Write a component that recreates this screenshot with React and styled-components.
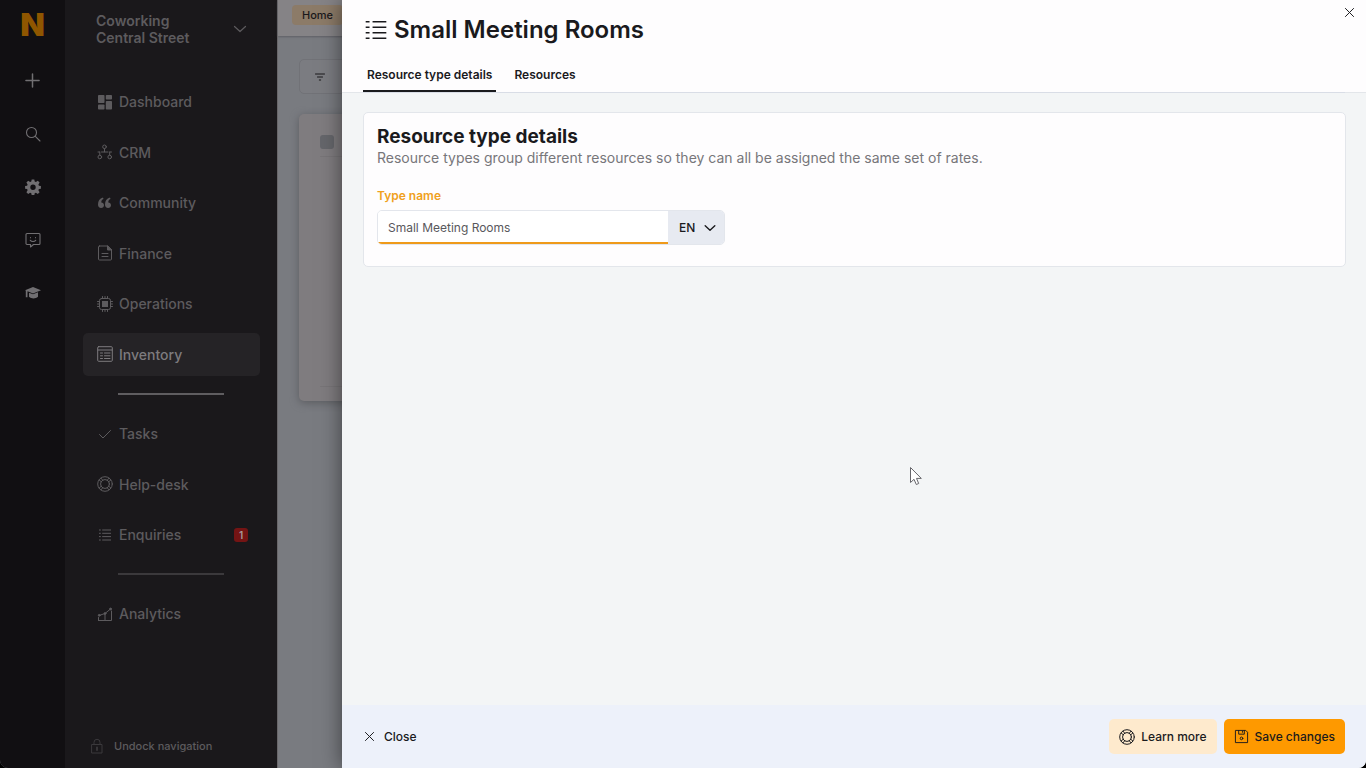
import React from "react";
import styled, { createGlobalStyle, css } from "styled-components";

const GlobalStyle = createGlobalStyle`
  *, *::before, *::after { box-sizing: border-box; }
  body {
    margin: 0;
    background: #000;
    font-family: Inter, "Liberation Sans", sans-serif;
    color: #1a1a1d;
  }
  button, input, select { font: inherit; color: inherit; }
  h1, h2, p, ul { margin: 0; padding: 0; }
  ul { list-style: none; }
`;

const Svg = styled.svg`
  display: block;
  flex: none;
  width: ${(p) => p.$size || 16}px;
  height: ${(p) => p.$size || 16}px;
  fill: none;
  stroke: currentColor;
  stroke-width: ${(p) => p.$weight || 1};
  stroke-linecap: round;
  stroke-linejoin: round;
`;

const shapes = {
  plus: <path d="M8 1v14M1 8h14" />,
  search: (
    <>
      <circle cx="6.5" cy="6.5" r="5" />
      <path d="m10.3 10.3 4.7 4.7" />
    </>
  ),
  gear: (
    <path
      fill="currentColor"
      stroke="none"
      fillRule="evenodd"
      d="M6.7.5h2.6l.4 2 1.2.5 1.9-1.200 1.800 1.800-1.200 1.900.5 1.200 2 .4v2.600l-2 .4-.5 1.200 1.200 1.900-1.800 1.800-1.900-1.200-1.200.5-.4 2H6.700l-.4-2-1.200-.5-1.900 1.200-1.800-1.800 1.200-1.900-.5-1.200-2-.4V7.100l2-.4.5-1.200-1.200-1.900 1.800-1.800 1.900 1.200 1.200-.5zM8 5.600a2.700 2.700 0 1 0 0 5.400 2.700 2.700 0 0 0 0-5.400z"
    />
  ),
  chat: (
    <>
      <path d="M2 1.500h12a1 1 0 0 1 1 1v9a1 1 0 0 1-1 1H8.500L5.500 15v-2.500H2a1 1 0 0 1-1-1v-9a1 1 0 0 1 1-1z" />
      <path d="M5.500 5.500v.2M10.500 5.500v.2M5.300 8.300c1.300 1.600 4.100 1.600 5.400 0" />
    </>
  ),
  cap: (
    <>
      <path fill="currentColor" stroke="none" d="M8 2 16 5.200 8 8.400 2.500 6.200v6H.8V5.500L0 5.200z" />
      <path fill="currentColor" stroke="none" d="M4 7.700 8 9.300l5-2v4.500c-2.500 2.300-6.500 2.300-9 0z" />
    </>
  ),
  dashboard: (
    <g fill="currentColor" stroke="none">
      <rect x="1" y="1" width="6.500" height="8" rx="0.800" />
      <rect x="1" y="10.500" width="6.500" height="5" rx="0.800" />
      <rect x="8.800" y="1" width="6.200" height="4.500" rx="0.800" />
      <rect x="8.800" y="7" width="6.200" height="8.500" rx="0.800" />
    </g>
  ),
  crm: (
    <>
      <circle cx="7.500" cy="2.800" r="1.800" />
      <circle cx="2.800" cy="13" r="1.800" />
      <circle cx="12.700" cy="13" r="1.800" />
      <path d="M7.500 4.800v3M1 8h1.500M4.500 8h6.500M13 8h1.500M2.800 8v3M12.700 8v3" />
    </>
  ),
  quote: (
    <g fill="currentColor" stroke="none">
      <path d="M6 2.500C2.600 3.600 1 6 1 9.500c0 2.200 1.200 3.500 3.100 3.500 1.700 0 2.900-1.200 2.900-2.800S5.900 7.400 4.300 7.400c0-1.600.6-2.700 2.200-3.400z" />
      <path d="M13 2.500C9.600 3.600 8 6 8 9.500c0 2.200 1.200 3.500 3.100 3.500 1.700 0 2.900-1.200 2.900-2.800s-1.100-2.800-2.700-2.800c0-1.600.6-2.700 2.200-3.400z" />
    </g>
  ),
  finance: (
    <>
      <path d="M2.500 1h8L14.500 5v9a1 1 0 0 1-1 1h-11a1 1 0 0 1-1-1V2a1 1 0 0 1 1-1z" />
      <path fill="currentColor" d="M10.500 1v4h4z" />
      <path d="M5 8.500h6M5 11.500h6" />
    </>
  ),
  cpu: (
    <>
      <rect x="2.500" y="2.500" width="11" height="11" rx="2" />
      <rect x="5" y="5" width="6" height="6" fill="currentColor" stroke="none" />
      <path d="M5.500.5v2M8 .5v2M10.500.5v2M5.500 13.500v2M8 13.500v2M10.500 13.500v2M.5 5.500h2M.5 8h2M.5 10.500h2M13.500 5.500h2M13.500 8h2M13.500 10.500h2" />
    </>
  ),
  inventory: (
    <>
      <rect x="0.700" y="0.700" width="14.600" height="14.600" rx="1" />
      <path d="M1 4h14M3.500 7h2M3.500 9.800h2M3.500 12.500h2M7.500 7H13M7.500 9.800H13M7.500 12.500H13" />
    </>
  ),
  check: <path d="m2.500 8.500 3.500 3.500 7.500-7.500" />,
  ring: (
    <>
      <circle cx="8" cy="8" r="7.300" />
      <circle cx="8" cy="8" r="4.400" />
      <path d="M4 2.200 5.900 4.400M2.200 4l2.200 1.900M12 2.200l-1.900 2.200M13.800 4l-2.200 1.900M4 13.800l1.900-2.200M2.200 12l2.200-1.900M12 13.800l-1.900-2.200M13.800 12l-2.200-1.900" />
    </>
  ),
  list: (
    <path
      strokeLinecap="butt"
      d="M2 3h1.800M2 6.300h1.800M2 9.600h1.800M2 13h1.800M5.200 3H14M5.200 6.300H14M5.200 9.600H14M5.200 13H14"
    />
  ),
  chart: (
    <>
      <path d="M1.500 14.500h13V5M1.500 14.500v-3M8 14.500V8M2 9.500 8 7.500 13.500 3" />
      <circle cx="2.200" cy="9.300" r="0.900" fill="currentColor" />
      <circle cx="8" cy="7.500" r="0.900" fill="currentColor" />
      <circle cx="13.500" cy="3" r="0.900" fill="currentColor" />
    </>
  ),
  lock: (
    <>
      <path d="M3 6.500h10v8.500H3zM5 6.500V4.300a3 3 0 0 1 6 0v2.200" />
      <path d="M8 9.500v2.500" strokeWidth="1.800" />
    </>
  ),
  chevron: <path d="m2.500 5.500 5.500 5 5.500-5" />,
  filter: <path d="M3.500 5h9M5.500 8h5M7.300 11h1.400" />,
  close: <path d="m3 3 10 10M13 3 3 13" />,
  save: (
    <>
      <path d="M2 1.500h10.500L14.500 3.500v11h-13v-12.500z" />
      <path d="M5 1.500v4h6v-4M9 2.500v1" />
      <circle cx="8" cy="10" r="1.400" />
    </>
  ),
  bullets: (
    <path
      strokeLinecap="butt"
      d="M.5 2h2.800M.5 6h2.800M.5 10h2.800M.5 14h2.800M5.500 2h10M5.500 6h10M5.500 10h10M5.500 14h10"
    />
  ),
};

function Icon({ name, size, weight }) {
  return (
    <Svg viewBox="0 0 16 16" $size={size} $weight={weight} aria-hidden="true">
      {shapes[name]}
    </Svg>
  );
}

const Shell = styled.div`
  position: relative;
  display: grid;
  grid-template-columns: 65px 213px minmax(0, 1fr);
  min-height: 100vh;
  overflow: hidden;
  border-radius: 0 0 8px 8px;
  background: #797b80;
`;

const Rail = styled.nav`
  display: flex;
  flex-direction: column;
  align-items: center;
  background: #110f12;
  color: #716f72;
`;

const Logo = styled.div`
  display: flex;
  align-items: center;
  height: 48px;
  font-size: 32px;
  font-weight: 900;
  color: #8f5600;
`;

const RailButton = styled.button`
  display: grid;
  place-items: center;
  width: 100%;
  height: 53px;
  margin-top: ${(p) => (p.$first ? 6 : 0)}px;
  padding: 0;
  border: 0;
  background: none;
`;

const Sidebar = styled.aside`
  display: flex;
  flex-direction: column;
  padding: 0 17px 0 18px;
  border-right: 1px solid #69676a;
  background: #1a181b;
  color: #5d5b5e;
`;

const Location = styled.button`
  display: flex;
  align-items: center;
  justify-content: space-between;
  height: 57px;
  margin-bottom: 23px;
  padding: 0 12px 0 13px;
  border: 0;
  background: none;
  font-size: 14px;
  font-weight: 600;
  line-height: 17px;
  text-align: left;
`;

const NavList = styled.ul`
  display: flex;
  flex-direction: column;
  justify-content: space-between;
  min-height: ${(p) => p.$height}px;
`;

const NavLink = styled.a`
  display: flex;
  align-items: center;
  gap: 6px;
  height: 43px;
  padding: 0 12px 0 14px;
  border-radius: 5px;
  font-size: 14px;
  font-weight: 500;
  color: inherit;
  text-decoration: none;
  ${(p) =>
    p.$active &&
    css`
      background: #252326;
      color: #7d7b7e;
    `}
`;

const Count = styled.span`
  display: grid;
  place-items: center;
  width: 14px;
  height: 14px;
  margin-left: auto;
  border-radius: 3px;
  background: #741414;
  color: #a89a9b;
  font-size: 10px;
  font-weight: 600;
`;

const Divider = styled.hr`
  width: 106px;
  height: 2px;
  margin: 17px 35px;
  border: 0;
  background: ${(p) => (p.$bright ? "#5f5d60" : "#3b393c")};
`;

const Undock = styled.button`
  display: flex;
  align-items: center;
  gap: 9px;
  height: 44px;
  margin-top: auto;
  padding: 0 6px;
  border: 0;
  background: none;
  font-size: 11px;
  font-weight: 500;
`;

const Faint = styled.span`
  color: #3b393c;
`;

const Page = styled.div`
  min-width: 0;
  color: #1a181b;
`;

const TopBar = styled.header`
  display: flex;
  align-items: flex-start;
  height: 36px;
  padding: 5px 14px;
  background: #858386;
  box-shadow: 0 1px 2px #5f5f64;
`;

const Crumb = styled.a`
  display: flex;
  align-items: center;
  height: 20px;
  padding: 0 10px;
  border-radius: 4px;
  background: #8c7b68;
  font-size: 11px;
  font-weight: 500;
  color: #1a181b;
  text-decoration: none;
`;

const PageBody = styled.div`
  display: flex;
  flex-direction: column;
  gap: 20px;
  padding: 23px 21px;
`;

const FilterButton = styled.button`
  display: flex;
  align-items: center;
  width: 120px;
  height: 35px;
  padding: 0 12px;
  border: 1px solid #717277;
  border-radius: 5px;
  background: #7b7c81;
`;

const Panel = styled.section`
  height: 287px;
  padding: 21px;
  border-radius: 5px;
  background: #7f7c7f;
  box-shadow: 0 2px 8px #5b5c60;
`;

const Tick = styled.input`
  display: block;
  appearance: none;
  width: 14px;
  height: 14px;
  margin: 0;
  border-radius: 3px;
  background: #65666b;
`;

const PanelRule = styled.hr`
  height: 1px;
  margin: ${(p) => p.$top}px 0 0;
  border: 0;
  background: #787578;
`;

const Drawer = styled.main`
  position: absolute;
  inset: 0 0 0 342px;
  display: flex;
  flex-direction: column;
  background: #f3f5f6;
  box-shadow: 0 0 20px rgba(0, 0, 0, 0.5);
`;

const DrawerHead = styled.header`
  position: relative;
  padding: 14px 21px 0;
  background: #fefdfe;
  box-shadow: 0 1px 0 #e3e6ea;
`;

const TitleRow = styled.div`
  display: flex;
  align-items: center;
  gap: 7px;
  height: 32px;
  padding-left: 2px;
`;

const Title = styled.h1`
  font-size: 24px;
  line-height: 32px;
  font-weight: 600;
`;

const Dismiss = styled.button`
  position: absolute;
  top: 3px;
  right: 8px;
  display: grid;
  place-items: center;
  width: 18px;
  height: 18px;
  padding: 0;
  border: 0;
  background: none;
`;

const Tabs = styled.div`
  display: flex;
  gap: 14px;
  margin-top: 13px;
  box-shadow: 0 1px 0 #d9dde6;
`;

const Tab = styled.button`
  height: 33px;
  padding: 0 4px;
  border: 0;
  border-bottom: 2px solid ${(p) => (p.$active ? "#1a1a1d" : "transparent")};
  background: none;
  font-size: 12px;
  font-weight: 600;
`;

const DrawerBody = styled.div`
  flex: 1;
  padding: 20px 20px 20px 21px;
`;

const Card = styled.section`
  min-height: 155px;
  padding: 13px;
  border: 1px solid #e3e6eb;
  border-radius: 5px;
  background: #fefdfe;
`;

const CardTitle = styled.h2`
  font-size: 19px;
  line-height: 22px;
  font-weight: 700;
`;

const Hint = styled.p`
  font-size: 14px;
  line-height: 20px;
  color: #77767a;
`;

const Field = styled.div`
  width: 348px;
  max-width: 100%;
  margin-top: 19px;
`;

const Label = styled.label`
  display: block;
  font-size: 12px;
  line-height: 18px;
  font-weight: 600;
  color: #f0a020;
`;

const InputGroup = styled.div`
  display: flex;
  height: 35px;
  margin-top: 5px;
  border: 1px solid #e3e6ec;
  border-radius: 5px;
  overflow: hidden;
`;

const TextInput = styled.input`
  flex: 1;
  min-width: 0;
  padding: 1px 10px 0;
  border: 0;
  border-bottom: 2px solid #ef9a1a;
  outline: 0;
  background: #fff;
  font-size: 12px;
  color: #59585c;
`;

const LanguageBox = styled.div`
  display: grid;
  grid-template-columns: 1fr;
  align-items: center;
  width: 56px;
  background: #e7eaf1;

  > * {
    grid-area: 1 / 1;
  }

  > svg {
    justify-self: end;
    margin-right: 7px;
    pointer-events: none;
  }
`;

const Language = styled.select`
  appearance: none;
  width: 100%;
  height: 100%;
  padding: 0 11px;
  border: 0;
  outline: 0;
  background: none;
  font-size: 12px;
  font-weight: 500;
`;

const Footer = styled.footer`
  display: flex;
  align-items: center;
  gap: 7px;
  height: 63px;
  padding: 0 21px;
  background: #edf1fa;
`;

const Button = styled.button`
  display: flex;
  align-items: center;
  gap: 6px;
  height: 35px;
  padding: 0 10px;
  border: 0;
  border-radius: 5px;
  background: ${(p) => p.$fill || "none"};
  font-size: 12px;
  font-weight: 500;
  white-space: nowrap;
`;

const CloseButton = styled(Button)`
  gap: 8px;
  margin-right: auto;
  padding: 0;
`;

const Pointer = styled.svg`
  position: absolute;
  left: 567px;
  top: 466px;
  width: 14px;
  height: 20px;
`;

const railItems = [
  ["plus", "Add", 15, 1.6],
  ["search", "Search", 16, 1.1],
  ["gear", "Settings", 16, 1],
  ["chat", "Feedback", 16, 1.1],
  ["cap", "Academy", 16, 1],
];

const mainItems = [
  ["dashboard", "Dashboard"],
  ["crm", "CRM"],
  ["quote", "Community"],
  ["finance", "Finance"],
  ["cpu", "Operations"],
  ["inventory", "Inventory"],
];

const workItems = [
  ["check", "Tasks"],
  ["ring", "Help-desk"],
  ["list", "Enquiries", 1],
];

function NavGroup({ items, height, active }) {
  return (
    <NavList $height={height}>
      {items.map(([icon, label, count]) => (
        <li key={label}>
          <NavLink href="#" $active={label === active}>
            <Icon name={icon} size={16} />
            {label}
            {count && <Count>{count}</Count>}
          </NavLink>
        </li>
      ))}
    </NavList>
  );
}

export default function App() {
  return (
    <>
      <GlobalStyle />
      <Shell>
        <Rail aria-label="Shortcuts">
          <Logo>N</Logo>
          {railItems.map(([icon, label, size, weight], i) => (
            <RailButton key={label} aria-label={label} $first={i === 0}>
              <Icon name={icon} size={size} weight={weight} />
            </RailButton>
          ))}
        </Rail>

        <Sidebar>
          <Location>
            <span>
              Coworking
              <br />
              Central Street
            </span>
            <Icon name="chevron" size={16} weight={1.2} />
          </Location>
          <NavGroup items={mainItems} height={296} active="Inventory" />
          <Divider $bright />
          <NavGroup items={workItems} height={144} />
          <Divider />
          <NavGroup items={[["chart", "Analytics"]]} height={43} />
          <Undock>
            <Faint>
              <Icon name="lock" size={16} />
            </Faint>
            Undock navigation
          </Undock>
        </Sidebar>

        <Page>
          <TopBar>
            <Crumb href="#">Home</Crumb>
          </TopBar>
          <PageBody>
            <FilterButton aria-label="Filter">
              <Icon name="filter" size={16} />
            </FilterButton>
            <Panel>
              <Tick type="checkbox" aria-label="Select all" />
              <PanelRule $top={7} />
              <PanelRule $top={229} />
            </Panel>
          </PageBody>
        </Page>

        <Drawer>
          <DrawerHead>
            <TitleRow>
              <Icon name="bullets" size={22} weight={1.2} />
              <Title>Small Meeting Rooms</Title>
            </TitleRow>
            <Dismiss aria-label="Dismiss">
              <Icon name="close" size={13} weight={1.2} />
            </Dismiss>
            <Tabs role="tablist">
              <Tab role="tab" aria-selected="true" $active>
                Resource type details
              </Tab>
              <Tab role="tab" aria-selected="false">
                Resources
              </Tab>
            </Tabs>
          </DrawerHead>

          <DrawerBody>
            <Card>
              <CardTitle>Resource type details</CardTitle>
              <Hint>
                Resource types group different resources so they can all be assigned the same set of
                rates.
              </Hint>
              <Field>
                <Label htmlFor="type-name">Type name</Label>
                <InputGroup>
                  <TextInput id="type-name" defaultValue="Small Meeting Rooms" />
                  <LanguageBox>
                    <Language aria-label="Language" defaultValue="EN">
                      <option>EN</option>
                    </Language>
                    <Icon name="chevron" size={14} weight={1.6} />
                  </LanguageBox>
                </InputGroup>
              </Field>
            </Card>
          </DrawerBody>

          <Footer>
            <CloseButton>
              <Icon name="close" size={13} weight={1.2} />
              Close
            </CloseButton>
            <Button $fill="#feeacd">
              <Icon name="ring" size={16} />
              Learn more
            </Button>
            <Button $fill="#fe9900">
              <Icon name="save" size={15} />
              Save changes
            </Button>
          </Footer>

          <Pointer viewBox="0 0 14 20" aria-hidden="true">
            <path
              d="M1.500 1.500v15l3.500-3.200 2.300 5.200 2.400-1-2.200-5.100h4.800z"
              fill="#fff"
              stroke="#66666b"
              strokeWidth="1"
            />
          </Pointer>
        </Drawer>
      </Shell>
    </>
  );
}
